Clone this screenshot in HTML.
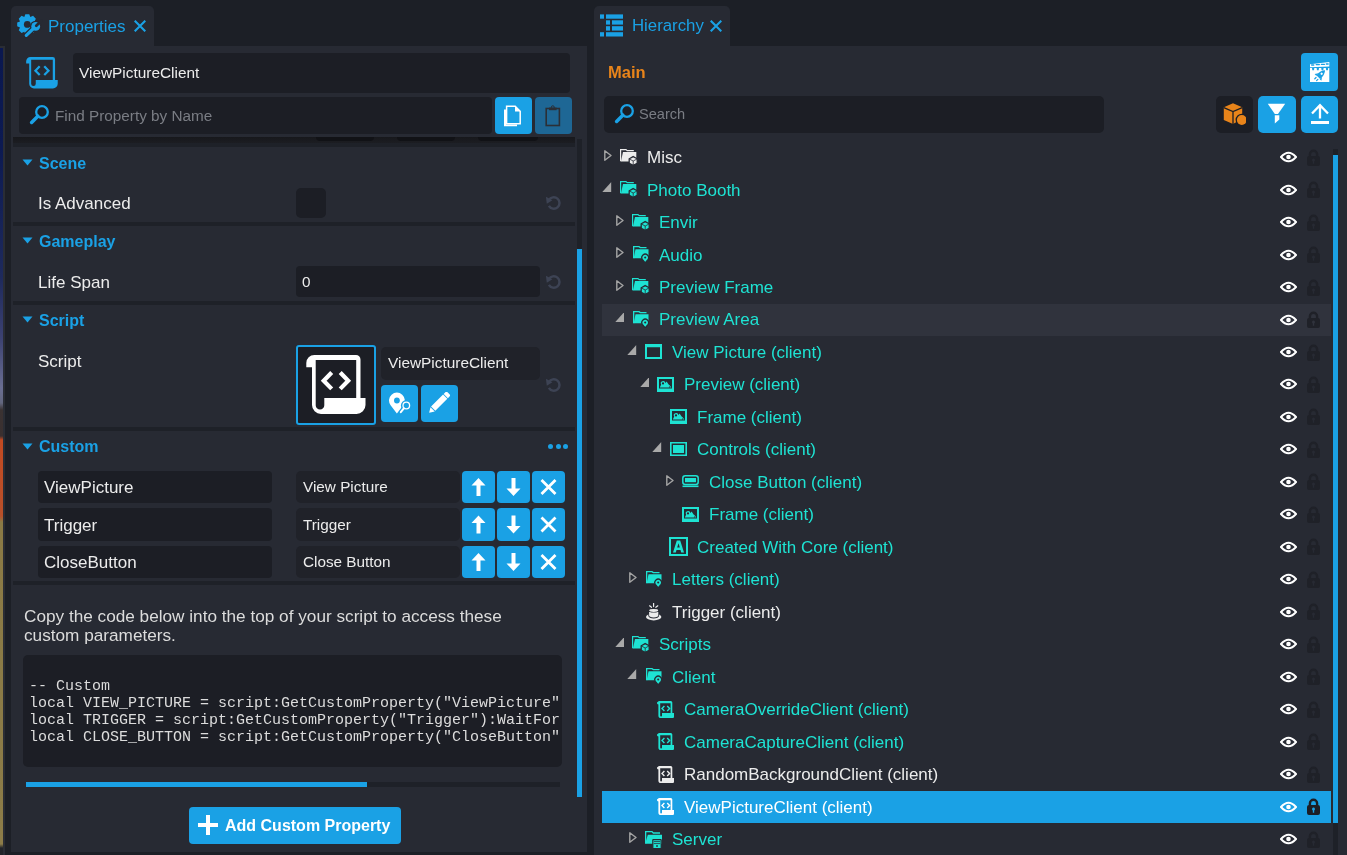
<!DOCTYPE html>
<html><head><meta charset="utf-8"><title>Core Editor</title>
<style>
html,body{margin:0;padding:0;}
body{width:1347px;height:855px;overflow:hidden;background:#1c1f26;position:relative;font-family:"Liberation Sans",sans-serif;}
.r{position:absolute;}
.t{position:absolute;line-height:1;white-space:nowrap;will-change:transform;}
</style></head><body>

<div class="r" style="left:0px;top:46px;width:5px;height:809px;background:#2a2d35;"></div>
<div class="r" style="left:0;top:48px;width:2.5px;height:807px;background:linear-gradient(#0a1850 0px,#0c1a52 100px,#1e2a5c 230px,#3c4272 290px,#6a6e92 340px,#62667e 355px,#3a3232 362px,#3a3030 388px,#c24a22 392px,#b8502a 468px,#8a7a45 474px,#8c7c48 796px,#22242a 800px)"></div>
<div class="r" style="left:11px;top:6px;width:143px;height:40px;background:#272a33;border-radius:5px 5px 0 0;"></div>
<div class="r" style="left:11px;top:46px;width:576px;height:806px;background:#272a33;"></div>
<svg class="r" style="left:14px;top:10px;" width="30" height="30" viewBox="0 0 30 30"><path fill="#1aa1e5" d="M10.28 7.10 L11.33 4.29 L15.27 4.29 L16.32 7.10 L19.06 5.86 L21.84 8.64 L20.60 11.38 L23.41 12.43 L23.41 16.37 L20.60 17.42 L21.84 20.16 L19.06 22.94 L16.32 21.70 L15.27 24.51 L11.33 24.51 L10.28 21.70 L7.54 22.94 L4.76 20.16 L6.00 17.42 L3.19 16.37 L3.19 12.43 L6.00 11.38 L4.76 8.64 L7.54 5.86 Z"/>
<circle cx="13.3" cy="14.4" r="3.4" fill="#272a33"/>
<path d="M12.3 25.3 L21.6 16.5" stroke="#272a33" stroke-width="5.8" stroke-linecap="round"/>
<circle cx="21.7" cy="16.4" r="5.7" fill="#272a33"/>
<path d="M12.3 25.3 L20.5 17.5" stroke="#1aa1e5" stroke-width="3.2" stroke-linecap="round"/>
<circle cx="21.7" cy="16.4" r="4.4" fill="#1aa1e5"/>
<path d="M22.3 15.8 L27.5 10.6" stroke="#272a33" stroke-width="2.8" stroke-linecap="round"/>
</svg>
<div class="t" style="left:47.60px;top:17.81px;font-size:17px;color:#1aa1e5;font-family:'Liberation Sans',sans-serif;">Properties</div>
<svg class="r" style="left:134px;top:19.5px;" width="12" height="12" viewBox="0 0 12 12"><path d="M0.7 0.7L11.3 11.3M11.3 0.7L0.7 11.3" stroke="#1aa1e5" stroke-width="2.1"/></svg>
<div class="r" style="left:594px;top:6px;width:136px;height:40px;background:#272a33;border-radius:5px 5px 0 0;"></div>
<div class="r" style="left:594px;top:46px;width:753px;height:809px;background:#272a33;"></div>
<svg class="r" style="left:600px;top:14px;" width="24" height="23" viewBox="0 0 24 23"><g fill="#1aa1e5">
<rect x="0" y="0.4" width="4" height="4.3"/><rect x="6" y="0.4" width="17" height="4.3"/>
<rect x="6" y="6.3" width="4" height="4.3"/><rect x="12" y="6.3" width="11" height="4.3"/>
<rect x="6" y="12.2" width="4" height="4.4"/><rect x="12" y="12.2" width="11" height="4.4"/>
<rect x="0" y="18.2" width="4" height="4.3"/><rect x="6" y="18.2" width="17" height="4.3"/>
</g></svg>
<div class="t" style="left:632.00px;top:17.68px;font-size:16.8px;color:#1aa1e5;font-family:'Liberation Sans',sans-serif;">Hierarchy</div>
<svg class="r" style="left:710px;top:19.5px;" width="12" height="12" viewBox="0 0 12 12"><path d="M0.7 0.7L11.3 11.3M11.3 0.7L0.7 11.3" stroke="#1aa1e5" stroke-width="2.1"/></svg>
<svg width="0" height="0" style="position:absolute">
<defs>
<symbol id="scrollBig" viewBox="0 0 60 60">
 <path fill-rule="evenodd" d="M0.3 12.2 V8 A8 8 0 0 1 8.3 0 H50 A4.5 4.5 0 0 1 54.5 4.5 V43 H59.5 V50 A9 9 0 0 1 50.5 59 H15 A9 9 0 0 1 6 50 V12.2 Z M9.7 5 H50.2 V43 H18.3 V50.2 A4.3 4.3 0 0 1 9.7 50.2 Z"/>
 <path d="M25.7 17.5 L17.7 25.7 L25.7 33.9 M34.2 17.5 L42.2 25.7 L34.2 33.9" fill="none" stroke-width="4.2" stroke-linejoin="miter" stroke="currentColor"/>
</symbol>
<symbol id="scrollSmall" viewBox="0 0 17.5 17">
 <circle cx="1.35" cy="2.1" r="1.35"/>
 <path d="M1.4 0 H13.8 A1.5 1.5 0 0 1 15.3 1.5 V12.2 H13.6 V2.2 H3.2 V14.6 A0.9 0.9 0 0 0 5 14.6 V11.9 H17.4 V14.6 A2.4 2.4 0 0 1 15 17 H4 A2.6 2.6 0 0 1 1.4 14.4 Z"/>
 <path d="M7.4 5 L5 7.5 L7.4 10 M10.2 5 L12.6 7.5 L10.2 10" fill="none" stroke-width="1.4" stroke="currentColor"/>
</symbol>
<symbol id="eye" viewBox="0 0 17 12">
 <path d="M1 6 Q8.5 -2.5 16 6 Q8.5 14.5 1 6 Z" fill="none" stroke="currentColor" stroke-width="2"/>
 <circle cx="8.5" cy="6" r="2.3" fill="currentColor"/>
</symbol>
<symbol id="lock" viewBox="0 0 13 17">
 <path d="M2.9 7.5 V5.3 A3.6 3.6 0 0 1 10.1 5.3 V7.5" fill="none" stroke="currentColor" stroke-width="2.4"/>
 <path fill="currentColor" fill-rule="evenodd" d="M2 7 H11 A2 2 0 0 1 13 9 V15 A2 2 0 0 1 11 17 H2 A2 2 0 0 1 0 15 V9 A2 2 0 0 1 2 7 Z M6.5 9.6 A1.5 1.5 0 0 0 5.8 12.4 V14.8 H7.2 V12.4 A1.5 1.5 0 0 0 6.5 9.6 Z"/>
</symbol>
<symbol id="arrC" viewBox="0 0 8 11">
 <path d="M0.8 0.8 V10.2 L7 5.5 Z" fill="none" stroke="currentColor" stroke-width="1.4" stroke-linejoin="round"/>
</symbol>
<symbol id="arrE" viewBox="0 0 9 10">
 <path d="M9 0 V10 H0 Z" fill="currentColor"/>
</symbol>
<symbol id="fcube" viewBox="0 0 18 17">
 <path d="M0.6 12.3 V0.6 H6 L7.2 1.7 H13.8" fill="none" stroke="currentColor" stroke-width="1.2"/>
 <path d="M3 3 H16.3 V12.4 H0.9 Z" fill="currentColor"/>
 <path d="M13.2 7.6 L17.2 9.8 V14.3 L13.2 16.4 L9.2 14.3 V9.8 Z" fill="currentColor" stroke="#272a33" stroke-width="1.3"/>
 <path d="M9.2 9.9 L13.2 12 L17.2 9.9 M13.2 12 V16.4" fill="none" stroke="#272a33" stroke-width="0.8"/>
</symbol>
<symbol id="fpin" viewBox="0 0 16 17">
 <path d="M0.65 12.2 V0.65 H6 L7.3 1.6 H13.5" fill="none" stroke="currentColor" stroke-width="1.3"/>
 <path d="M2.5 3.2 H15.5 V12.3 H0.7 Z" fill="currentColor"/>
 <path d="M12.2 17 L9.3 13.3 A3.4 3.4 0 1 1 15.1 13.3 Z" fill="currentColor" stroke="#272a33" stroke-width="1.3"/>
 <circle cx="12.2" cy="11.5" r="1.05" fill="#272a33"/>
</symbol>
<symbol id="fserver" viewBox="0 0 17 18">
 <path d="M0.65 12.5 V0.65 H7 L8.3 2 H15" fill="none" stroke="currentColor" stroke-width="1.3"/>
 <path d="M2.8 3.8 H17 V12.8 H0.2 Z" fill="currentColor"/>
 <rect x="7.8" y="8.6" width="8.4" height="8.9" rx="0.5" fill="currentColor" stroke="#272a33" stroke-width="1.2"/>
 <path d="M8.8 10.6 H15.2 M8.8 12.6 H15.2" stroke="#272a33" stroke-width="0.8"/>
 <rect x="11.2" y="14.2" width="1.6" height="1.6" fill="#272a33"/>
</symbol>
<symbol id="window" viewBox="0 0 17 15">
 <path d="M0 0 H17 V15 H0 Z M2 3.2 V13 H15 V3.2 Z" fill="currentColor" fill-rule="evenodd"/>
</symbol>
<symbol id="image" viewBox="0 0 17 15">
 <path d="M0 0 H17 V15 H0 Z M2 2 V11.4 H15 V2 Z" fill="currentColor" fill-rule="evenodd"/>
 <path d="M2.8 10.6 L4.2 7.6 A2.3 2.3 0 1 1 8.4 5.9 L9.6 4.4 L11.6 7.6 L12.6 8.3 L14.4 10.6 Z" fill="currentColor"/>
 <circle cx="6" cy="6.4" r="1.1" fill="#272a33"/>
 <path d="M11.9 10.6 L12.6 9 L13.3 10.6 Z" fill="#272a33"/>
</symbol>
<symbol id="panelIco" viewBox="0 0 17 14">
 <path d="M0 0 H17 V14 H0 Z M1.6 1.6 V12.4 H15.4 V1.6 Z" fill="currentColor" fill-rule="evenodd"/>
 <rect x="3" y="3" width="11" height="8" fill="currentColor"/>
</symbol>
<symbol id="buttonIco" viewBox="0 0 17 13">
 <rect x="0.8" y="0.8" width="15.4" height="8.6" rx="2.5" fill="none" stroke="currentColor" stroke-width="1.5"/>
 <rect x="3" y="3" width="11" height="4.2" fill="currentColor"/>
 <path d="M0.5 11.3 H16.5" stroke="currentColor" stroke-width="1.6"/>
</symbol>
<symbol id="textIco" viewBox="0 0 19 19">
 <path d="M0 0 H19 V19 H0 Z M2 2 V17 H17 V2 Z" fill="currentColor" fill-rule="evenodd"/>
 <path d="M7.8 3.5 H11.2 L15 15.5 H12.2 L11.5 13 H7.5 L6.8 15.5 H4 Z M8.2 10.6 H10.8 L9.5 6.3 Z" fill="currentColor" fill-rule="evenodd"/>
</symbol>
<symbol id="trigger" viewBox="0 0 16 18">
 <ellipse cx="7.7" cy="13.9" rx="7.7" ry="3.5" fill="currentColor"/>
 <path d="M2.3 8.5 V12.8 A5.4 2.6 0 0 0 13.1 12.8 V8.5 Z" fill="#272a33"/>
 <path d="M3.1 9 V12.6 A4.6 1.8 0 0 0 12.3 12.6 V9 Z" fill="currentColor"/>
 <ellipse cx="7.7" cy="7.6" rx="5.2" ry="2" fill="#272a33"/>
 <ellipse cx="7.7" cy="7.5" rx="4.5" ry="1.4" fill="currentColor"/>
 <path d="M7.6 0.4 V3.6 M3.6 2.8 L5.5 4.3 M11.8 2.8 L9.9 4.3" stroke="currentColor" stroke-width="1.2" stroke-linecap="round"/>
</symbol>
</defs></svg>
<svg class="r" style="left:26px;top:57px;color:#1aa1e5;fill:#1aa1e5" width="32" height="32"><use href="#scrollBig" width="32" height="32"/></svg>
<div class="r" style="left:73px;top:53px;width:497px;height:40px;background:#1c1e25;border-radius:4px;"></div>
<div class="t" style="left:79.00px;top:64.66px;font-size:15.4px;color:#ececec;font-family:'Liberation Sans',sans-serif;">ViewPictureClient</div>
<div class="r" style="left:19px;top:97px;width:473px;height:37px;background:#1c1e25;border-radius:4px;"></div>
<svg class="r" style="left:29px;top:104px;" width="21" height="21" viewBox="0 0 21 21"><circle cx="13" cy="8" r="5.8" fill="none" stroke="#1aa1e5" stroke-width="2.3"/><path d="M8.8 12.2 L2.6 18.4" stroke="#1aa1e5" stroke-width="3.5" stroke-linecap="round"/></svg>
<div class="t" style="left:54.50px;top:108.25px;font-size:15.3px;color:#7a7d84;font-family:'Liberation Sans',sans-serif;">Find Property by Name</div>
<div class="r" style="left:495px;top:97px;width:37px;height:37px;background:#1aa1e5;border-radius:4px;"></div>
<svg class="r" style="left:503px;top:105px;" width="20" height="22" viewBox="0 0 20 22"><path d="M1 4.5 H3 V19.5 H14 V21.2 H1 Z" fill="#fff"/><path d="M3.6 1.2 H12.2 L17.2 6.2 V18.8 H3.6 Z" fill="none" stroke="#fff" stroke-width="1.5"/><path d="M12 1.2 V6.4 H17.2 Z" fill="#fff"/></svg>
<div class="r" style="left:535px;top:97px;width:37px;height:37px;background:#1e6795;border-radius:4px;"></div>
<svg class="r" style="left:545px;top:105px;" width="16" height="22" viewBox="0 0 16 22"><rect x="1.2" y="3.5" width="13.2" height="17" fill="none" stroke="#2b2f36" stroke-width="1.6"/><rect x="4" y="2.6" width="7.6" height="2.6" fill="#2b2f36"/><circle cx="7.8" cy="2.3" r="1.5" fill="none" stroke="#2b2f36" stroke-width="1"/></svg>
<div class="r" style="left:13px;top:137px;width:562px;height:6px;background:linear-gradient(#17181c,#1c1d22)"></div>
<div class="r" style="left:316px;top:137px;width:58px;height:3.6px;background:#111216;border-radius:0 0 6px 6px;filter:blur(0.6px)"></div>
<div class="r" style="left:397px;top:137px;width:58px;height:3.6px;background:#111216;border-radius:0 0 6px 6px;filter:blur(0.6px)"></div>
<div class="r" style="left:478px;top:137px;width:60px;height:3.6px;background:#111216;border-radius:0 0 6px 6px;filter:blur(0.6px)"></div>
<div class="r" style="left:13px;top:143px;width:562px;height:4px;background:#1e2128;"></div>
<div class="r" style="left:13px;top:222px;width:562px;height:4px;background:#1e2128;"></div>
<div class="r" style="left:13px;top:301px;width:562px;height:4px;background:#1e2128;"></div>
<div class="r" style="left:13px;top:427px;width:562px;height:4px;background:#1e2128;"></div>
<div class="r" style="left:13px;top:581px;width:562px;height:4px;background:#1e2128;"></div>
<svg class="r" style="left:21.7px;top:159.3px;" width="11" height="7" viewBox="0 0 11 7"><path d="M0.5 0.5 H10.5 L5.5 6.5 Z" fill="#1aa1e5"/></svg>
<div class="t" style="left:38.60px;top:156.06px;font-size:16px;color:#1aa1e5;font-weight:bold;font-family:'Liberation Sans',sans-serif;">Scene</div>
<div class="t" style="left:38.20px;top:194.61px;font-size:17px;color:#ececec;font-family:'Liberation Sans',sans-serif;">Is Advanced</div>
<div class="r" style="left:296px;top:188px;width:30px;height:30px;background:#1c1e25;border-radius:5px;"></div>
<svg class="r" style="left:545px;top:195px;" width="16" height="16" viewBox="0 0 16 16"><path d="M3.9 5.1 A5.7 5.7 0 1 1 3.9 10.9" fill="none" stroke="#3d4354" stroke-width="2.5"/><path d="M0.9 1.8 L7.4 5.3 L1.8 8.8 Z" fill="#3d4354"/></svg>
<svg class="r" style="left:21.7px;top:237.2px;" width="11" height="7" viewBox="0 0 11 7"><path d="M0.5 0.5 H10.5 L5.5 6.5 Z" fill="#1aa1e5"/></svg>
<div class="t" style="left:38.60px;top:233.96px;font-size:16px;color:#1aa1e5;font-weight:bold;font-family:'Liberation Sans',sans-serif;">Gameplay</div>
<div class="t" style="left:38.20px;top:273.81px;font-size:17px;color:#ececec;font-family:'Liberation Sans',sans-serif;">Life Span</div>
<div class="r" style="left:296px;top:266px;width:244px;height:31px;background:#1c1e25;border-radius:4px;"></div>
<div class="t" style="left:302.00px;top:274.45px;font-size:15.3px;color:#ececec;font-family:'Liberation Sans',sans-serif;">0</div>
<svg class="r" style="left:545px;top:274px;" width="16" height="16" viewBox="0 0 16 16"><path d="M3.9 5.1 A5.7 5.7 0 1 1 3.9 10.9" fill="none" stroke="#3d4354" stroke-width="2.5"/><path d="M0.9 1.8 L7.4 5.3 L1.8 8.8 Z" fill="#3d4354"/></svg>
<svg class="r" style="left:21.7px;top:316.3px;" width="11" height="7" viewBox="0 0 11 7"><path d="M0.5 0.5 H10.5 L5.5 6.5 Z" fill="#1aa1e5"/></svg>
<div class="t" style="left:38.60px;top:313.06px;font-size:16px;color:#1aa1e5;font-weight:bold;font-family:'Liberation Sans',sans-serif;">Script</div>
<div class="t" style="left:38.20px;top:352.61px;font-size:17px;color:#ececec;font-family:'Liberation Sans',sans-serif;">Script</div>
<div class="r" style="left:296px;top:345px;width:80px;height:80px;background:#1c1e25;border-radius:3px;box-shadow:inset 0 0 0 2px #1aa1e5;"></div>
<svg class="r" style="left:305.5px;top:355px;color:#ffffff;fill:#ffffff" width="60" height="60"><use href="#scrollBig" width="60" height="60"/></svg>
<div class="r" style="left:381px;top:347px;width:159px;height:33px;background:#202229;border-radius:5px;"></div>
<div class="t" style="left:388.00px;top:355.06px;font-size:15.4px;color:#ececec;font-family:'Liberation Sans',sans-serif;">ViewPictureClient</div>
<div class="r" style="left:381px;top:385px;width:37px;height:37px;background:#1aa1e5;border-radius:4px;"></div>
<svg class="r" style="left:388px;top:392px;" width="24" height="24" viewBox="0 0 24 24"><path d="M8.9 21.6 L2.6 13.27 A7.9 7.9 0 1 1 15.2 13.27 Z" fill="#fff"/><circle cx="8.9" cy="8.5" r="2.9" fill="#1aa1e5"/><circle cx="18.3" cy="13.5" r="5.4" fill="#1aa1e5"/><circle cx="18.3" cy="13.5" r="3.3" fill="none" stroke="#fff" stroke-width="1.3"/><path d="M15.8 16.4 L12.8 20.2" stroke="#fff" stroke-width="2" stroke-linecap="round"/></svg>
<div class="r" style="left:421px;top:385px;width:37px;height:37px;background:#1aa1e5;border-radius:4px;"></div>
<svg class="r" style="left:428px;top:392px;" width="24" height="24" viewBox="0 0 24 24"><path d="M1.1 20.8 L2.52 15.14 L6.76 19.38 Z" fill="#fff"/><path d="M3.08 14.58 L15.08 2.56 L19.32 6.8 L7.32 18.82 Z" fill="#fff"/><path d="M15.7 1.95 L17.3 0.35 A1.6 1.6 0 0 1 19.6 0.35 L21.5 2.25 A1.6 1.6 0 0 1 21.5 4.55 L19.9 6.15 Z" fill="#fff"/></svg>
<svg class="r" style="left:545px;top:377px;" width="16" height="16" viewBox="0 0 16 16"><path d="M3.9 5.1 A5.7 5.7 0 1 1 3.9 10.9" fill="none" stroke="#3d4354" stroke-width="2.5"/><path d="M0.9 1.8 L7.4 5.3 L1.8 8.8 Z" fill="#3d4354"/></svg>
<svg class="r" style="left:21.7px;top:442.5px;" width="11" height="7" viewBox="0 0 11 7"><path d="M0.5 0.5 H10.5 L5.5 6.5 Z" fill="#1aa1e5"/></svg>
<div class="t" style="left:38.60px;top:439.26px;font-size:16px;color:#1aa1e5;font-weight:bold;font-family:'Liberation Sans',sans-serif;">Custom</div>
<div class="r" style="left:548.0px;top:443.5px;width:5.2px;height:5.2px;border-radius:50%;background:#1aa1e5"></div>
<div class="r" style="left:555.5px;top:443.5px;width:5.2px;height:5.2px;border-radius:50%;background:#1aa1e5"></div>
<div class="r" style="left:563.0px;top:443.5px;width:5.2px;height:5.2px;border-radius:50%;background:#1aa1e5"></div>
<div class="r" style="left:38px;top:471px;width:234px;height:32px;background:#1c1e25;border-radius:4px;"></div>
<div class="t" style="left:44.40px;top:479.11px;font-size:17px;color:#ececec;font-family:'Liberation Sans',sans-serif;">ViewPicture</div>
<div class="r" style="left:296px;top:471px;width:164px;height:32px;background:#202229;border-radius:5px;"></div>
<div class="t" style="left:302.70px;top:479.05px;font-size:15.3px;color:#ececec;font-family:'Liberation Sans',sans-serif;">View Picture</div>
<div class="r" style="left:462px;top:471px;width:33px;height:32px;background:#1aa1e5;border-radius:4px;"></div>
<svg class="r" style="left:462px;top:471px;" width="33" height="32" viewBox="0 0 33 32"><g transform="translate(16.5 16.0)"><path d="M0 -9 L7 -1.5 H2 V9 H-2 V-1.5 H-7 Z" fill="#fff"/></g></svg>
<div class="r" style="left:497px;top:471px;width:33px;height:32px;background:#1aa1e5;border-radius:4px;"></div>
<svg class="r" style="left:497px;top:471px;" width="33" height="32" viewBox="0 0 33 32"><g transform="translate(16.5 16.0)"><path d="M0 9 L7 1.5 H2 V-9 H-2 V1.5 H-7 Z" fill="#fff"/></g></svg>
<div class="r" style="left:532px;top:471px;width:33px;height:32px;background:#1aa1e5;border-radius:4px;"></div>
<svg class="r" style="left:532px;top:471px;" width="33" height="32" viewBox="0 0 33 32"><g transform="translate(16.5 16.0)"><path d="M-7 -7 L7 7 M7 -7 L-7 7" stroke="#fff" stroke-width="2.8"/></g></svg>
<div class="r" style="left:38px;top:508px;width:234px;height:33px;background:#1c1e25;border-radius:4px;"></div>
<div class="t" style="left:44.40px;top:517.01px;font-size:17px;color:#ececec;font-family:'Liberation Sans',sans-serif;">Trigger</div>
<div class="r" style="left:296px;top:508px;width:164px;height:33px;background:#202229;border-radius:5px;"></div>
<div class="t" style="left:302.70px;top:517.05px;font-size:15.3px;color:#ececec;font-family:'Liberation Sans',sans-serif;">Trigger</div>
<div class="r" style="left:462px;top:508px;width:33px;height:33px;background:#1aa1e5;border-radius:4px;"></div>
<svg class="r" style="left:462px;top:508px;" width="33" height="33" viewBox="0 0 33 33"><g transform="translate(16.5 16.5)"><path d="M0 -9 L7 -1.5 H2 V9 H-2 V-1.5 H-7 Z" fill="#fff"/></g></svg>
<div class="r" style="left:497px;top:508px;width:33px;height:33px;background:#1aa1e5;border-radius:4px;"></div>
<svg class="r" style="left:497px;top:508px;" width="33" height="33" viewBox="0 0 33 33"><g transform="translate(16.5 16.5)"><path d="M0 9 L7 1.5 H2 V-9 H-2 V1.5 H-7 Z" fill="#fff"/></g></svg>
<div class="r" style="left:532px;top:508px;width:33px;height:33px;background:#1aa1e5;border-radius:4px;"></div>
<svg class="r" style="left:532px;top:508px;" width="33" height="33" viewBox="0 0 33 33"><g transform="translate(16.5 16.5)"><path d="M-7 -7 L7 7 M7 -7 L-7 7" stroke="#fff" stroke-width="2.8"/></g></svg>
<div class="r" style="left:38px;top:546px;width:234px;height:32px;background:#1c1e25;border-radius:4px;"></div>
<div class="t" style="left:44.40px;top:553.71px;font-size:17px;color:#ececec;font-family:'Liberation Sans',sans-serif;">CloseButton</div>
<div class="r" style="left:296px;top:546px;width:164px;height:32px;background:#202229;border-radius:5px;"></div>
<div class="t" style="left:302.70px;top:553.85px;font-size:15.3px;color:#ececec;font-family:'Liberation Sans',sans-serif;">Close Button</div>
<div class="r" style="left:462px;top:546px;width:33px;height:32px;background:#1aa1e5;border-radius:4px;"></div>
<svg class="r" style="left:462px;top:546px;" width="33" height="32" viewBox="0 0 33 32"><g transform="translate(16.5 16.0)"><path d="M0 -9 L7 -1.5 H2 V9 H-2 V-1.5 H-7 Z" fill="#fff"/></g></svg>
<div class="r" style="left:497px;top:546px;width:33px;height:32px;background:#1aa1e5;border-radius:4px;"></div>
<svg class="r" style="left:497px;top:546px;" width="33" height="32" viewBox="0 0 33 32"><g transform="translate(16.5 16.0)"><path d="M0 9 L7 1.5 H2 V-9 H-2 V1.5 H-7 Z" fill="#fff"/></g></svg>
<div class="r" style="left:532px;top:546px;width:33px;height:32px;background:#1aa1e5;border-radius:4px;"></div>
<svg class="r" style="left:532px;top:546px;" width="33" height="32" viewBox="0 0 33 32"><g transform="translate(16.5 16.0)"><path d="M-7 -7 L7 7 M7 -7 L-7 7" stroke="#fff" stroke-width="2.8"/></g></svg>
<div class="t" style="left:23.80px;top:607.54px;font-size:17.2px;color:#dcdcdc;font-family:'Liberation Sans',sans-serif;">Copy the code below into the top of your script to access these</div>
<div class="t" style="left:23.80px;top:627.44px;font-size:17.2px;color:#dcdcdc;font-family:'Liberation Sans',sans-serif;">custom parameters.</div>
<div class="r" style="left:23px;top:655px;width:539px;height:112px;background:#1c1e25;border-radius:5px;"></div>
<div class="r" style="left:28.5px;top:677.5px;width:531px;height:70px;overflow:hidden;will-change:transform;font-family:'Liberation Mono',monospace;font-size:15px;line-height:17px;color:#dcdcdc;white-space:pre">-- Custom
local VIEW_PICTURE = script:GetCustomProperty("ViewPicture"):WaitForObject()
local TRIGGER = script:GetCustomProperty("Trigger"):WaitForObject()
local CLOSE_BUTTON = script:GetCustomProperty("CloseButton"):WaitForObject()</div>
<div class="r" style="left:26px;top:782px;width:534px;height:5px;background:#1e2128;"></div>
<div class="r" style="left:26px;top:782px;width:341px;height:5px;background:#1aa1e5;"></div>
<div class="r" style="left:577px;top:139px;width:5px;height:658px;background:#1e2128;"></div>
<div class="r" style="left:577px;top:249px;width:5px;height:548px;background:#1aa1e5;"></div>
<div class="r" style="left:189px;top:807px;width:212px;height:37px;background:#1aa1e5;border-radius:4px;"></div>
<svg class="r" style="left:197px;top:814px;" width="22" height="22" viewBox="0 0 22 22"><path d="M11 1 V21 M1 11 H21" stroke="#fff" stroke-width="4"/></svg>
<div class="t" style="left:225.40px;top:817.56px;font-size:16px;color:#ffffff;font-weight:bold;font-family:'Liberation Sans',sans-serif;">Add Custom Property</div>
<div class="t" style="left:607.50px;top:63.93px;font-size:16.5px;color:#e8841a;font-weight:bold;font-family:'Liberation Sans',sans-serif;">Main</div>
<div class="r" style="left:604px;top:96px;width:500px;height:37px;background:#1c1e25;border-radius:5px;"></div>
<svg class="r" style="left:614px;top:103px;" width="21" height="21" viewBox="0 0 21 21"><circle cx="13" cy="8" r="5.8" fill="none" stroke="#1aa1e5" stroke-width="2.3"/><path d="M8.8 12.2 L2.6 18.4" stroke="#1aa1e5" stroke-width="3.5" stroke-linecap="round"/></svg>
<div class="t" style="left:639.40px;top:106.54px;font-size:14.6px;color:#7a7d84;font-family:'Liberation Sans',sans-serif;">Search</div>
<div class="r" style="left:1301px;top:53px;width:37px;height:38px;background:#1aa1e5;border-radius:4px;"></div>
<svg class="r" style="left:1300px;top:52px;" width="40" height="40" viewBox="0 0 40 40"><path d="M10 12.3 L29.3 10 V14.6 L10 15.3 Z" fill="#fff"/>
<path d="M11.6 13 H13.8 M16.2 12.6 H19.4 M21.3 12.3 H24.5 M26.3 12 H28.2" stroke="#1aa1e5" stroke-width="1.3" stroke-linecap="round"/>
<rect x="10" y="16" width="19.3" height="14" fill="#fff"/>
<path d="M12 16 H14.3 L14 18.2 H12.3 Z M16.6 16 H19 L18.7 18.2 H17 Z M21.2 16 H23.6 L23.3 18.2 H21.6 Z M25.8 16 H28.2 L27.9 18.2 H26.2 Z" fill="#1aa1e5"/>
<g transform="translate(19.8 23.6) rotate(45)"><path d="M0 -7.4 Q3.2 -4.2 2.7 2.2 H-2.7 Q-3.2 -4.2 0 -7.4 Z" fill="#1aa1e5"/><path d="M-2.5 -0.8 L-4.8 2.6 L-2.5 2.6 Z M2.5 -0.8 L4.8 2.6 L2.5 2.6 Z" fill="#1aa1e5"/><path d="M-1.3 4 V5.8 M1.3 4 V5.8" stroke="#1aa1e5" stroke-width="1.2" stroke-linecap="round"/><circle cx="0" cy="-2.6" r="1.15" fill="#fff"/></g></svg>
<div class="r" style="left:1216px;top:96px;width:37px;height:37px;background:#1c1e25;border-radius:5px;"></div>
<svg class="r" style="left:1222px;top:102px;" width="24" height="24" viewBox="0 0 24 24"><path d="M1.8 5.2 L11 1.2 L20.2 5.2 V12.5 A5.5 5.5 0 0 0 15.5 19.5 L11 22 L1.8 18 Z" fill="#e8841a"/>
<path d="M1.8 5.6 L11 9.6 L20.2 5.6 M11 9.6 V22" fill="none" stroke="#1c1e25" stroke-width="1.3"/>
<circle cx="19.8" cy="18" r="6.2" fill="#1c1e25"/><circle cx="19.8" cy="18" r="4.9" fill="#e8841a"/></svg>
<div class="r" style="left:1258px;top:96px;width:38px;height:37px;background:#1aa1e5;border-radius:5px;"></div>
<svg class="r" style="left:1267px;top:103px;" width="19" height="21" viewBox="0 0 19 21"><path d="M0.8 0.8 H18.2 L11 11 H7.8 Z" fill="#fff"/><path d="M7.8 12.2 H12.3 V16.5 L7.8 20.5 Z" fill="#fff"/></svg>
<div class="r" style="left:1301px;top:96px;width:37px;height:37px;background:#1aa1e5;border-radius:5px;"></div>
<svg class="r" style="left:1310px;top:103px;" width="20" height="22" viewBox="0 0 20 22"><path d="M2 10.5 L10 2.2 L18 10.5 M10 2.5 V15.5" fill="none" stroke="#fff" stroke-width="2.3"/><rect x="1" y="18" width="18" height="3" fill="#fff"/></svg>
<svg class="r" style="left:603.7px;top:150.0px;color:#a4a4a4;fill:#a4a4a4" width="8" height="11"><use href="#arrC" width="8" height="11"/></svg>
<svg class="r" style="left:619.6px;top:148.6px;color:#ececec;fill:#ececec" width="18" height="17"><use href="#fcube" width="18" height="17"/></svg>
<div class="t" style="left:647.00px;top:149.11px;font-size:17px;color:#ececec;font-family:'Liberation Sans',sans-serif;">Misc</div>
<svg class="r" style="left:1280px;top:151.2px;color:#ffffff;fill:#ffffff" width="17" height="12"><use href="#eye" width="17" height="12"/></svg>
<svg class="r" style="left:1307px;top:148.7px;color:#1f2128;fill:#1f2128" width="13" height="17"><use href="#lock" width="13" height="17"/></svg>
<svg class="r" style="left:602.2px;top:182.17px;color:#a9a9a9;fill:#a9a9a9" width="9.6" height="10"><use href="#arrE" width="9.6" height="10"/></svg>
<svg class="r" style="left:619.6px;top:181.07px;color:#1ee3d3;fill:#1ee3d3" width="18" height="17"><use href="#fcube" width="18" height="17"/></svg>
<div class="t" style="left:647.00px;top:181.58px;font-size:17px;color:#1ee3d3;font-family:'Liberation Sans',sans-serif;">Photo Booth</div>
<svg class="r" style="left:1280px;top:183.67px;color:#ffffff;fill:#ffffff" width="17" height="12"><use href="#eye" width="17" height="12"/></svg>
<svg class="r" style="left:1307px;top:181.17px;color:#1f2128;fill:#1f2128" width="13" height="17"><use href="#lock" width="13" height="17"/></svg>
<svg class="r" style="left:616.2px;top:214.94px;color:#a4a4a4;fill:#a4a4a4" width="8" height="11"><use href="#arrC" width="8" height="11"/></svg>
<svg class="r" style="left:632.1px;top:213.54px;color:#1ee3d3;fill:#1ee3d3" width="18" height="17"><use href="#fcube" width="18" height="17"/></svg>
<div class="t" style="left:659.00px;top:214.05px;font-size:17px;color:#1ee3d3;font-family:'Liberation Sans',sans-serif;">Envir</div>
<svg class="r" style="left:1280px;top:216.14px;color:#ffffff;fill:#ffffff" width="17" height="12"><use href="#eye" width="17" height="12"/></svg>
<svg class="r" style="left:1307px;top:213.64px;color:#1f2128;fill:#1f2128" width="13" height="17"><use href="#lock" width="13" height="17"/></svg>
<svg class="r" style="left:616.2px;top:247.41px;color:#a4a4a4;fill:#a4a4a4" width="8" height="11"><use href="#arrC" width="8" height="11"/></svg>
<svg class="r" style="left:633.2px;top:246.31px;color:#1ee3d3;fill:#1ee3d3" width="16" height="17"><use href="#fpin" width="16" height="17"/></svg>
<div class="t" style="left:659.00px;top:246.52px;font-size:17px;color:#1ee3d3;font-family:'Liberation Sans',sans-serif;">Audio</div>
<svg class="r" style="left:1280px;top:248.61px;color:#ffffff;fill:#ffffff" width="17" height="12"><use href="#eye" width="17" height="12"/></svg>
<svg class="r" style="left:1307px;top:246.11px;color:#1f2128;fill:#1f2128" width="13" height="17"><use href="#lock" width="13" height="17"/></svg>
<svg class="r" style="left:616.2px;top:279.88px;color:#a4a4a4;fill:#a4a4a4" width="8" height="11"><use href="#arrC" width="8" height="11"/></svg>
<svg class="r" style="left:632.1px;top:278.48px;color:#1ee3d3;fill:#1ee3d3" width="18" height="17"><use href="#fcube" width="18" height="17"/></svg>
<div class="t" style="left:659.00px;top:278.99px;font-size:17px;color:#1ee3d3;font-family:'Liberation Sans',sans-serif;">Preview Frame</div>
<svg class="r" style="left:1280px;top:281.08px;color:#ffffff;fill:#ffffff" width="17" height="12"><use href="#eye" width="17" height="12"/></svg>
<svg class="r" style="left:1307px;top:278.58px;color:#1f2128;fill:#1f2128" width="13" height="17"><use href="#lock" width="13" height="17"/></svg>
<div class="r" style="left:602px;top:303.55px;width:729px;height:32.5px;background:#30333d;"></div>
<svg class="r" style="left:614.7px;top:312.05px;color:#a9a9a9;fill:#a9a9a9" width="9.6" height="10"><use href="#arrE" width="9.6" height="10"/></svg>
<svg class="r" style="left:633.2px;top:311.25px;color:#1ee3d3;fill:#1ee3d3" width="16" height="17"><use href="#fpin" width="16" height="17"/></svg>
<div class="t" style="left:659.00px;top:311.46px;font-size:17px;color:#1ee3d3;font-family:'Liberation Sans',sans-serif;">Preview Area</div>
<svg class="r" style="left:1280px;top:313.55px;color:#ffffff;fill:#ffffff" width="17" height="12"><use href="#eye" width="17" height="12"/></svg>
<svg class="r" style="left:1307px;top:311.05px;color:#1f2128;fill:#1f2128" width="13" height="17"><use href="#lock" width="13" height="17"/></svg>
<svg class="r" style="left:627.2px;top:344.52px;color:#a9a9a9;fill:#a9a9a9" width="9.6" height="10"><use href="#arrE" width="9.6" height="10"/></svg>
<svg class="r" style="left:644.8px;top:344.02px;color:#1ee3d3;fill:#1ee3d3" width="17" height="15"><use href="#window" width="17" height="15"/></svg>
<div class="t" style="left:672.00px;top:343.93px;font-size:17px;color:#1ee3d3;font-family:'Liberation Sans',sans-serif;">View Picture (client)</div>
<svg class="r" style="left:1280px;top:346.02px;color:#ffffff;fill:#ffffff" width="17" height="12"><use href="#eye" width="17" height="12"/></svg>
<svg class="r" style="left:1307px;top:343.52px;color:#1f2128;fill:#1f2128" width="13" height="17"><use href="#lock" width="13" height="17"/></svg>
<svg class="r" style="left:639.7px;top:376.99px;color:#a9a9a9;fill:#a9a9a9" width="9.6" height="10"><use href="#arrE" width="9.6" height="10"/></svg>
<svg class="r" style="left:657.1px;top:376.99px;color:#1ee3d3;fill:#1ee3d3" width="17" height="15"><use href="#image" width="17" height="15"/></svg>
<div class="t" style="left:684.00px;top:376.40px;font-size:17px;color:#1ee3d3;font-family:'Liberation Sans',sans-serif;">Preview (client)</div>
<svg class="r" style="left:1280px;top:378.49px;color:#ffffff;fill:#ffffff" width="17" height="12"><use href="#eye" width="17" height="12"/></svg>
<svg class="r" style="left:1307px;top:375.99px;color:#1f2128;fill:#1f2128" width="13" height="17"><use href="#lock" width="13" height="17"/></svg>
<svg class="r" style="left:669.6px;top:409.46px;color:#1ee3d3;fill:#1ee3d3" width="17" height="15"><use href="#image" width="17" height="15"/></svg>
<div class="t" style="left:697.00px;top:408.87px;font-size:17px;color:#1ee3d3;font-family:'Liberation Sans',sans-serif;">Frame (client)</div>
<svg class="r" style="left:1280px;top:410.96px;color:#ffffff;fill:#ffffff" width="17" height="12"><use href="#eye" width="17" height="12"/></svg>
<svg class="r" style="left:1307px;top:408.46px;color:#1f2128;fill:#1f2128" width="13" height="17"><use href="#lock" width="13" height="17"/></svg>
<svg class="r" style="left:652.2px;top:441.93px;color:#a9a9a9;fill:#a9a9a9" width="9.6" height="10"><use href="#arrE" width="9.6" height="10"/></svg>
<svg class="r" style="left:670.0px;top:442.43px;color:#1ee3d3;fill:#1ee3d3" width="17" height="14"><use href="#panelIco" width="17" height="14"/></svg>
<div class="t" style="left:697.00px;top:441.34px;font-size:17px;color:#1ee3d3;font-family:'Liberation Sans',sans-serif;">Controls (client)</div>
<svg class="r" style="left:1280px;top:443.43px;color:#ffffff;fill:#ffffff" width="17" height="12"><use href="#eye" width="17" height="12"/></svg>
<svg class="r" style="left:1307px;top:440.93px;color:#1f2128;fill:#1f2128" width="13" height="17"><use href="#lock" width="13" height="17"/></svg>
<svg class="r" style="left:666.2px;top:474.7px;color:#a4a4a4;fill:#a4a4a4" width="8" height="11"><use href="#arrC" width="8" height="11"/></svg>
<svg class="r" style="left:682.3px;top:475.2px;color:#1ee3d3;fill:#1ee3d3" width="17" height="13"><use href="#buttonIco" width="17" height="13"/></svg>
<div class="t" style="left:709.00px;top:473.81px;font-size:17px;color:#1ee3d3;font-family:'Liberation Sans',sans-serif;">Close Button (client)</div>
<svg class="r" style="left:1280px;top:475.9px;color:#ffffff;fill:#ffffff" width="17" height="12"><use href="#eye" width="17" height="12"/></svg>
<svg class="r" style="left:1307px;top:473.4px;color:#1f2128;fill:#1f2128" width="13" height="17"><use href="#lock" width="13" height="17"/></svg>
<svg class="r" style="left:682.1px;top:506.87px;color:#1ee3d3;fill:#1ee3d3" width="17" height="15"><use href="#image" width="17" height="15"/></svg>
<div class="t" style="left:709.00px;top:506.28px;font-size:17px;color:#1ee3d3;font-family:'Liberation Sans',sans-serif;">Frame (client)</div>
<svg class="r" style="left:1280px;top:508.37px;color:#ffffff;fill:#ffffff" width="17" height="12"><use href="#eye" width="17" height="12"/></svg>
<svg class="r" style="left:1307px;top:505.87px;color:#1f2128;fill:#1f2128" width="13" height="17"><use href="#lock" width="13" height="17"/></svg>
<svg class="r" style="left:668.7px;top:537.24px;color:#1ee3d3;fill:#1ee3d3" width="19" height="19"><use href="#textIco" width="19" height="19"/></svg>
<div class="t" style="left:697.00px;top:538.75px;font-size:17px;color:#1ee3d3;font-family:'Liberation Sans',sans-serif;">Created With Core (client)</div>
<svg class="r" style="left:1280px;top:540.84px;color:#ffffff;fill:#ffffff" width="17" height="12"><use href="#eye" width="17" height="12"/></svg>
<svg class="r" style="left:1307px;top:538.34px;color:#1f2128;fill:#1f2128" width="13" height="17"><use href="#lock" width="13" height="17"/></svg>
<svg class="r" style="left:628.7px;top:572.11px;color:#a4a4a4;fill:#a4a4a4" width="8" height="11"><use href="#arrC" width="8" height="11"/></svg>
<svg class="r" style="left:645.7px;top:571.01px;color:#1ee3d3;fill:#1ee3d3" width="16" height="17"><use href="#fpin" width="16" height="17"/></svg>
<div class="t" style="left:672.00px;top:571.22px;font-size:17px;color:#1ee3d3;font-family:'Liberation Sans',sans-serif;">Letters (client)</div>
<svg class="r" style="left:1280px;top:573.31px;color:#ffffff;fill:#ffffff" width="17" height="12"><use href="#eye" width="17" height="12"/></svg>
<svg class="r" style="left:1307px;top:570.81px;color:#1f2128;fill:#1f2128" width="13" height="17"><use href="#lock" width="13" height="17"/></svg>
<svg class="r" style="left:645.7px;top:603.28px;color:#ececec;fill:#ececec" width="16" height="18"><use href="#trigger" width="16" height="18"/></svg>
<div class="t" style="left:672.00px;top:603.69px;font-size:17px;color:#ececec;font-family:'Liberation Sans',sans-serif;">Trigger (client)</div>
<svg class="r" style="left:1280px;top:605.78px;color:#ffffff;fill:#ffffff" width="17" height="12"><use href="#eye" width="17" height="12"/></svg>
<svg class="r" style="left:1307px;top:603.28px;color:#1f2128;fill:#1f2128" width="13" height="17"><use href="#lock" width="13" height="17"/></svg>
<svg class="r" style="left:614.7px;top:636.75px;color:#a9a9a9;fill:#a9a9a9" width="9.6" height="10"><use href="#arrE" width="9.6" height="10"/></svg>
<svg class="r" style="left:632.1px;top:635.65px;color:#1ee3d3;fill:#1ee3d3" width="18" height="17"><use href="#fcube" width="18" height="17"/></svg>
<div class="t" style="left:659.00px;top:636.16px;font-size:17px;color:#1ee3d3;font-family:'Liberation Sans',sans-serif;">Scripts</div>
<svg class="r" style="left:1280px;top:638.25px;color:#ffffff;fill:#ffffff" width="17" height="12"><use href="#eye" width="17" height="12"/></svg>
<svg class="r" style="left:1307px;top:635.75px;color:#1f2128;fill:#1f2128" width="13" height="17"><use href="#lock" width="13" height="17"/></svg>
<svg class="r" style="left:627.2px;top:669.22px;color:#a9a9a9;fill:#a9a9a9" width="9.6" height="10"><use href="#arrE" width="9.6" height="10"/></svg>
<svg class="r" style="left:645.7px;top:668.42px;color:#1ee3d3;fill:#1ee3d3" width="16" height="17"><use href="#fpin" width="16" height="17"/></svg>
<div class="t" style="left:672.00px;top:668.63px;font-size:17px;color:#1ee3d3;font-family:'Liberation Sans',sans-serif;">Client</div>
<svg class="r" style="left:1280px;top:670.72px;color:#ffffff;fill:#ffffff" width="17" height="12"><use href="#eye" width="17" height="12"/></svg>
<svg class="r" style="left:1307px;top:668.22px;color:#1f2128;fill:#1f2128" width="13" height="17"><use href="#lock" width="13" height="17"/></svg>
<svg class="r" style="left:656.9px;top:700.59px;color:#1ee3d3;fill:#1ee3d3" width="17.5" height="17"><use href="#scrollSmall" width="17.5" height="17"/></svg>
<div class="t" style="left:684.00px;top:701.10px;font-size:17px;color:#1ee3d3;font-family:'Liberation Sans',sans-serif;">CameraOverrideClient (client)</div>
<svg class="r" style="left:1280px;top:703.19px;color:#ffffff;fill:#ffffff" width="17" height="12"><use href="#eye" width="17" height="12"/></svg>
<svg class="r" style="left:1307px;top:700.69px;color:#1f2128;fill:#1f2128" width="13" height="17"><use href="#lock" width="13" height="17"/></svg>
<svg class="r" style="left:656.9px;top:733.06px;color:#1ee3d3;fill:#1ee3d3" width="17.5" height="17"><use href="#scrollSmall" width="17.5" height="17"/></svg>
<div class="t" style="left:684.00px;top:733.57px;font-size:17px;color:#1ee3d3;font-family:'Liberation Sans',sans-serif;">CameraCaptureClient (client)</div>
<svg class="r" style="left:1280px;top:735.66px;color:#ffffff;fill:#ffffff" width="17" height="12"><use href="#eye" width="17" height="12"/></svg>
<svg class="r" style="left:1307px;top:733.16px;color:#1f2128;fill:#1f2128" width="13" height="17"><use href="#lock" width="13" height="17"/></svg>
<svg class="r" style="left:656.9px;top:765.53px;color:#ececec;fill:#ececec" width="17.5" height="17"><use href="#scrollSmall" width="17.5" height="17"/></svg>
<div class="t" style="left:684.00px;top:766.04px;font-size:17px;color:#ececec;font-family:'Liberation Sans',sans-serif;">RandomBackgroundClient (client)</div>
<svg class="r" style="left:1280px;top:768.13px;color:#ffffff;fill:#ffffff" width="17" height="12"><use href="#eye" width="17" height="12"/></svg>
<svg class="r" style="left:1307px;top:765.63px;color:#1f2128;fill:#1f2128" width="13" height="17"><use href="#lock" width="13" height="17"/></svg>
<div class="r" style="left:602px;top:791.0px;width:729px;height:31.799999999999955px;background:#1aa1e5;"></div>
<svg class="r" style="left:656.9px;top:798.0px;color:#ffffff;fill:#ffffff" width="17.5" height="17"><use href="#scrollSmall" width="17.5" height="17"/></svg>
<div class="t" style="left:684.00px;top:798.51px;font-size:17px;color:#ffffff;font-family:'Liberation Sans',sans-serif;">ViewPictureClient (client)</div>
<svg class="r" style="left:1280px;top:800.6px;color:#ffffff;fill:#ffffff" width="17" height="12"><use href="#eye" width="17" height="12"/></svg>
<svg class="r" style="left:1307px;top:798.1px;color:#1c1e25;fill:#1c1e25" width="13" height="17"><use href="#lock" width="13" height="17"/></svg>
<svg class="r" style="left:628.7px;top:831.87px;color:#a4a4a4;fill:#a4a4a4" width="8" height="11"><use href="#arrC" width="8" height="11"/></svg>
<svg class="r" style="left:645.0px;top:830.97px;color:#1ee3d3;fill:#1ee3d3" width="17" height="18"><use href="#fserver" width="17" height="18"/></svg>
<div class="t" style="left:672.00px;top:830.98px;font-size:17px;color:#1ee3d3;font-family:'Liberation Sans',sans-serif;">Server</div>
<svg class="r" style="left:1280px;top:833.07px;color:#ffffff;fill:#ffffff" width="17" height="12"><use href="#eye" width="17" height="12"/></svg>
<svg class="r" style="left:1307px;top:830.57px;color:#1f2128;fill:#1f2128" width="13" height="17"><use href="#lock" width="13" height="17"/></svg>
<div class="r" style="left:1333px;top:149px;width:5px;height:706px;background:#1e2128;"></div>
<div class="r" style="left:1333px;top:155px;width:5px;height:668px;background:#1aa1e5;"></div>
</body></html>
